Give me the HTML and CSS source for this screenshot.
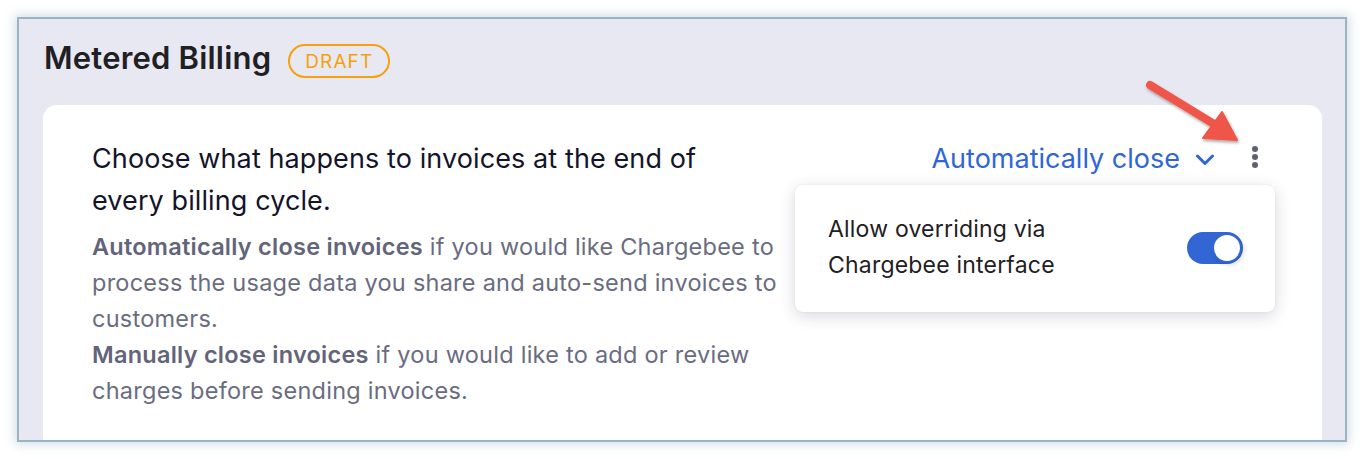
FILE: index.html
```html
<!DOCTYPE html>
<html lang="en">
<head>
<meta charset="utf-8">
<title>Metered Billing</title>
<link rel="stylesheet" href="styles.css">
</head>
<body>
<div class="frame">
  <div class="header">
    <h1 class="title">Metered Billing</h1>
    <span class="badge">DRAFT</span>
  </div>
  <div class="card">
    <div class="info">
      <p class="lead">Choose what happens to invoices at the end of every billing cycle.</p>
      <p class="desc"><strong>Automatically close invoices</strong> if you would like Chargebee to process the usage data you share and auto-send invoices to customers.</p>
      <p class="desc tight"><strong>Manually close invoices</strong> if you would like to add or review charges before sending invoices.</p>
    </div>
    <div class="controls">
      <button class="select">Automatically close
        <svg class="chev" width="20" height="12" viewBox="0 0 20 12"><path d="M2.5 2 L10 9.5 L17.5 2" fill="none" stroke="#2f66d6" stroke-width="3" stroke-linecap="round" stroke-linejoin="round"/></svg>
      </button>
      <span class="kebab"><i></i><i></i><i></i></span>
      <div class="popup">
        <span class="popup-text">Allow overriding via<br>Chargebee interface</span>
        <span class="toggle"><span class="knob"></span></span>
      </div>
    </div>
  </div>
  <svg class="arrow" width="130" height="100" viewBox="0 0 130 100">
    <defs>
      <filter id="sh" x="-20%" y="-20%" width="140%" height="140%">
        <feDropShadow dx="1" dy="2" stdDeviation="1.5" flood-color="#000" flood-opacity="0.35"/>
      </filter>
    </defs>
    <g filter="url(#sh)" fill="#f0544a" stroke="#f0544a" stroke-linejoin="round">
      <path d="M30 25 L94 64" stroke-width="8" stroke-linecap="round"/>
      <path d="M117 80 L83 78 L102 52 Z" stroke-width="2"/>
    </g>
  </svg>
</div>
</body>
</html>
```

FILE: styles.css
```css
* { box-sizing: border-box; }
html, body { margin: 0; padding: 0; background: #ffffff; }
body {
  font-family: Inter, "Noto Sans", "Liberation Sans", sans-serif;
  padding: 17px 0 0 17px;
  height: 459px;
  overflow: hidden;
}
.frame {
  position: relative;
  width: 1330px;
  height: 425px;
  border: 2px solid #9bb3c2;
  background: #e8e8f2;
  box-shadow: 0 0 10px 2px rgba(120, 160, 180, 0.35);
  padding: 0 23px 0 24px;
  overflow: hidden;
}
.header {
  display: flex;
  align-items: center;
  height: 86px;
  padding-left: 1px;
  padding-bottom: 9px;
}
.title {
  margin: 0;
  font-size: 31px;
  font-weight: 600;
  color: #1f2023;
  letter-spacing: 0.2px;
}
.badge {
  margin-left: 17px;
  margin-top: 7px;
  height: 34px;
  padding: 0 15px;
  border: 2px solid #f6a10c;
  border-radius: 17px;
  color: #f6a10c;
  font-size: 19px;
  letter-spacing: 1.1px;
  display: flex;
  align-items: center;
}
.card {
  background: #ffffff;
  border-radius: 14px 14px 0 0;
  height: 340px;
  display: flex;
  justify-content: space-between;
  padding: 33px 64px 0 49px;
}
.info { width: 700px; }
.lead {
  margin: 0;
  font-size: 27px;
  line-height: 42px;
  color: #13142a;
  width: 640px;
  letter-spacing: 0.1px;
}
.desc {
  margin: 7px 0 0;
  font-size: 23.5px;
  line-height: 36px;
  color: #6a6c80;
  letter-spacing: 0.25px;
}
.desc.tight { margin-top: 0; }
.desc strong { font-weight: 600; color: #62647a; }
.controls {
  position: relative;
  display: flex;
  align-items: flex-start;
  height: 44px;
}
.select {
  border: 0;
  background: none;
  padding: 0;
  font-family: inherit;
  font-size: 27px;
  line-height: 42px;
  color: #2f66d6;
  display: flex;
  align-items: center;
  gap: 15px;
}
.chev { margin-top: 1px; }
.kebab {
  display: flex;
  flex-direction: column;
  gap: 2px;
  margin-left: 37px;
  margin-top: 8px;
}
.kebab i {
  width: 6px;
  height: 6px;
  border-radius: 50%;
  background: #5f6171;
}
.popup {
  position: absolute;
  top: 47px;
  right: -17px;
  width: 480px;
  height: 127px;
  background: #ffffff;
  border-radius: 8px;
  box-shadow: 0 4px 16px rgba(40, 40, 70, 0.18), 0 0 2px rgba(40, 40, 70, 0.08);
  display: flex;
  align-items: center;
  justify-content: space-between;
  padding: 0 32px 0 33px;
}
.popup-text {
  font-size: 23px;
  line-height: 36px;
  color: #1f2024;
  margin-top: -4px;
  letter-spacing: 0.2px;
}
.toggle {
  width: 56px;
  height: 32px;
  border-radius: 16px;
  background: #3266d4;
  position: relative;
  margin-top: -2px;
}
.knob {
  position: absolute;
  right: 1px;
  top: 1px;
  width: 30px;
  height: 30px;
  border-radius: 50%;
  background: #ffffff;
  border: 2px solid #3266d4;
  box-shadow: 2px 2px 4px rgba(0,0,0,0.15);
}
.arrow {
  position: absolute;
  left: 1101px;
  top: 41px;
}
```
